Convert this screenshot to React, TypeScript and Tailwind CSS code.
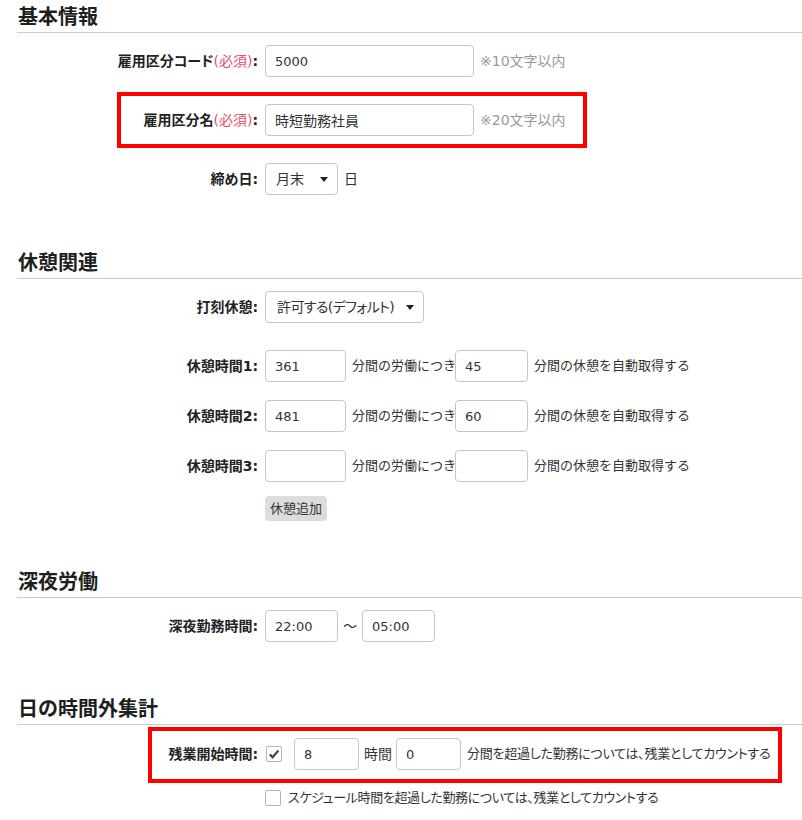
import React from "react";

const inputBase =
  "h-[32px] shrink-0 rounded-[4px] border border-[#c6c6c6] bg-white px-[9px] text-[#333] outline-none";

function Heading({ children, className = "" }: { children: React.ReactNode; className?: string }) {
  return (
    <h2
      className={
        "h-[33px] border-b border-[#cccccc] pl-[1px] pt-[2px] text-[20px] font-bold leading-[28px] text-[#1e1e1e] font-['Noto_Sans_CJK_JP',sans-serif] " +
        className
      }
    >
      {children}
    </h2>
  );
}

function Label({ children, width }: { children: React.ReactNode; width: string }) {
  return (
    <div
      className={
        width +
        " shrink-0 whitespace-nowrap pr-[7px] text-right text-[14px] font-bold leading-[20px] text-[#222] [font-feature-settings:'palt']"
      }
    >
      {children}
    </div>
  );
}

function Required() {
  return <span className="font-normal text-[#ec4d6b]">(必須)</span>;
}

function Caret() {
  return (
    <svg width="8" height="5" viewBox="0 0 8 5" className="shrink-0">
      <path d="M0 0 H8 L4 5 Z" fill="#222" />
    </svg>
  );
}

function SelectBox({ value, width, textCls }: { value: string; width: string; textCls: string }) {
  return (
    <div
      className={
        width +
        " flex h-[32px] shrink-0 items-center justify-between rounded-[4px] border border-[#c6c6c6] bg-white pr-[9px] text-[#333]"
      }
    >
      <span className={"whitespace-nowrap " + textCls}>{value}</span>
      <Caret />
    </div>
  );
}

function CheckBox({ checked }: { checked?: boolean }) {
  return (
    <span className="flex h-[16px] w-[16px] shrink-0 items-center justify-center rounded-[2px] border border-[#b4b4b4] bg-white">
      {checked && (
        <svg width="12" height="12" viewBox="0 0 12 12">
          <path d="M1.8 6.4 L4.6 9.2 L10.4 2.6" fill="none" stroke="#4a4a4a" strokeWidth="2.3" strokeLinejoin="miter" />
        </svg>
      )}
    </span>
  );
}

function BreakRow({ n, work, rest, className }: { n: number; work: string; rest: string; className: string }) {
  return (
    <div className={"flex h-[32px] items-center " + className}>
      <Label width="w-[248px]">休憩時間{n}:</Label>
      <input readOnly value={work} className={inputBase + " w-[81px] text-[13px]"} />
      <span className="ml-[6px] w-[103px] shrink-0 whitespace-nowrap text-[#333]">分間の労働につき</span>
      <input readOnly value={rest} className={inputBase + " w-[73px] text-[13px]"} />
      <span className="ml-[6px] whitespace-nowrap text-[#333]">分間の休憩を自動取得する</span>
    </div>
  );
}

export default function App() {
  return (
    <div className="min-h-[820px] bg-white pl-[17px] text-[13px] text-[#333] font-['DejaVu_Sans','Noto_Sans_CJK_JP',sans-serif]">
      {/* 基本情報 */}
      <Heading>基本情報</Heading>

      <div className="mt-[12px] flex h-[32px] items-center">
        <Label width="w-[248px]">
          雇用区分コード<Required />:
        </Label>
        <input readOnly value="5000" className={inputBase + " w-[209px] text-[13px]"} />
        <span className="ml-[6px] whitespace-nowrap text-[14px] text-[#999]">※10文字以内</span>
      </div>

      <div className="ml-[100px] mt-[15px] flex w-[470px] items-center border-4 border-[#ff0000] py-[8px]">
        <Label width="w-[144px]">
          雇用区分名<Required />:
        </Label>
        <input readOnly value="時短勤務社員" className={inputBase + " w-[209px] text-[14px]"} />
        <span className="ml-[6px] whitespace-nowrap text-[14px] text-[#999]">※20文字以内</span>
      </div>

      <div className="mt-[15px] flex h-[32px] items-center">
        <Label width="w-[248px]">締め日:</Label>
        <SelectBox value="月末" width="w-[73px] pl-[10px]" textCls="text-[14px]" />
        <span className="ml-[6px] text-[14px]">日</span>
      </div>

      {/* 休憩関連 */}
      <Heading className="mt-[51px]">休憩関連</Heading>

      <div className="mt-[12px] flex h-[32px] items-center">
        <Label width="w-[248px]">打刻休憩:</Label>
        <SelectBox
          value="許可する(デフォルト)"
          width="w-[159px] pl-[11px]"
          textCls="text-[14px] tracking-[-0.6px] [font-feature-settings:'palt']"
        />
      </div>

      <BreakRow n={1} work="361" rest="45" className="mt-[27px]" />
      <BreakRow n={2} work="481" rest="60" className="mt-[18px]" />
      <BreakRow n={3} work="" rest="" className="mt-[18px]" />

      <div className="mt-[14px] pl-[248px]">
        <button className="h-[25px] rounded-[4px] bg-[#dddddd] px-[5px] text-[13px] leading-[25px] text-[#333]">
          休憩追加
        </button>
      </div>

      {/* 深夜労働 */}
      <Heading className="mt-[44px]">深夜労働</Heading>

      <div className="mt-[12px] flex h-[32px] items-center">
        <Label width="w-[248px]">深夜勤務時間:</Label>
        <input readOnly value="22:00" className={inputBase + " w-[73px] text-[13px]"} />
        <span className="mx-[5px] text-[14px] text-[#333]">〜</span>
        <input readOnly value="05:00" className={inputBase + " w-[73px] text-[13px]"} />
      </div>

      {/* 日の時間外集計 */}
      <Heading className="mt-[50px]">日の時間外集計</Heading>

      <div className="ml-[131px] mt-[2px] flex w-[634px] items-center border-4 border-[#ff0000] pb-[9px] pt-[7px]">
        <Label width="w-[113px]">残業開始時間:</Label>
        <span className="ml-[1px]">
          <CheckBox checked />
        </span>
        <input readOnly value="8" className={inputBase + " ml-[12px] w-[65px] text-[13px]"} />
        <span className="ml-[5px] w-[32px] shrink-0 whitespace-nowrap text-[14px] [font-feature-settings:'palt']">時間</span>
        <input readOnly value="0" className={inputBase + " w-[65px] text-[13px]"} />
        <span className="ml-[6px] whitespace-nowrap tracking-[-0.25px] [font-feature-settings:'palt']">
          分間を超過した勤務については、残業としてカウントする
        </span>
      </div>

      <div className="mt-[5px] flex h-[20px] items-center pl-[248px]">
        <CheckBox />
        <span className="ml-[7px] whitespace-nowrap tracking-[-0.35px] [font-feature-settings:'palt']">
          スケジュール時間を超過した勤務については、残業としてカウントする
        </span>
      </div>
    </div>
  );
}
